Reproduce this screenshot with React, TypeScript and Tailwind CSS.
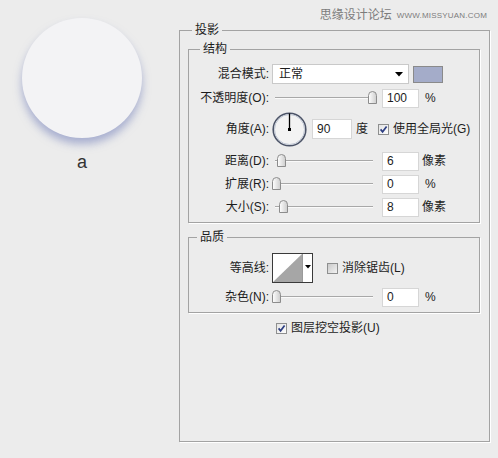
import type { ReactNode } from "react";

const labelCls = "w-[80px] shrink-0 text-right text-[12px] leading-[16px] text-[#1c1c1c]";
const legendCls = "px-[3px] text-[12px] leading-[16px] text-[#1c1c1c]";
const groupCls = "border border-[#a3a3a3] shadow-[1px_1px_0_#ffffff]";

function Label({ children }: { children: ReactNode }) {
  return <div className={labelCls}>{children}</div>;
}

function NumberBox({ value, width = 37, className = "" }: { value: string; width?: number; className?: string }) {
  return (
    <div
      className={`flex h-[19px] items-center border border-[#d6d6d6] bg-white pl-[4px] text-[12px] leading-[16px] text-[#1c1c1c] ${className}`}
      style={{ width }}
    >
      {value}
    </div>
  );
}

function Thumb({ left }: { left: number }) {
  return (
    <svg className="absolute top-0" style={{ left }} width="9" height="13" viewBox="0 0 9 13">
      <defs>
        <linearGradient id="thumbFill" x1="0" y1="0" x2="1" y2="0">
          <stop offset="0" stopColor="#ffffff" />
          <stop offset="1" stopColor="#cdcdcd" />
        </linearGradient>
      </defs>
      <path
        d="M0.5 4.5 Q0.5 0.5 4.5 0.5 Q8.5 0.5 8.5 4.5 V12.5 H0.5 Z"
        fill="url(#thumbFill)"
        stroke="#8c8c8c"
      />
    </svg>
  );
}

// offset = thumb centre in px from the start of the 98px track
function Slider({ offset }: { offset: number }) {
  return (
    <div className="relative ml-[2px] h-[14px] w-[106px] shrink-0">
      <div className="absolute left-[4px] right-[4px] top-[6px] h-px bg-[#a8a8a8]" />
      <div className="absolute left-[4px] right-[4px] top-[7px] h-px bg-[#fafafa]" />
      <Thumb left={offset - 0.5} />
    </div>
  );
}

function Checkbox({ checked }: { checked: boolean }) {
  return (
    <svg width="11" height="11" viewBox="0 0 11 11" className="shrink-0">
      <defs>
        <linearGradient id={checked ? "cbOn" : "cbOff"} x1="0" y1="0" x2="1" y2="1">
          <stop offset="0" stopColor={checked ? "#e2e2e2" : "#c8c8c8"} />
          <stop offset="1" stopColor={checked ? "#ffffff" : "#f4f4f4"} />
        </linearGradient>
      </defs>
      <rect x="0.5" y="0.5" width="10" height="10" fill={`url(#${checked ? "cbOn" : "cbOff"})`} stroke="#8e8f8f" />
      {checked && (
        <path d="M2.6 5.4 L4.6 7.8 L8.6 2.6" fill="none" stroke="#2d3e82" strokeWidth="1.7" />
      )}
    </svg>
  );
}

function Dial() {
  return (
    <svg width="35" height="35" viewBox="0 0 35 35" className="ml-[3px] shrink-0">
      <circle cx="17.5" cy="17.5" r="16.3" fill="#f3f3f3" stroke="#4b5367" strokeWidth="1.6" />
      <circle cx="17.5" cy="17.5" r="15" fill="none" stroke="#b4bccd" strokeWidth="0.8" />
      <line x1="17.5" y1="17.5" x2="17.5" y2="1.5" stroke="#000" strokeWidth="1.3" />
      <rect x="16" y="16" width="3" height="3" fill="#000" />
    </svg>
  );
}

function Contour() {
  return (
    <div className="ml-[3px] flex h-[30px] w-[41px] shrink-0 border border-[#3a3a3a] bg-white">
      <svg width="29" height="28" viewBox="0 0 29 28">
        <polygon points="0,28 29,0 29,28" fill="#a6a6a6" />
      </svg>
      <div className="flex flex-1 justify-center border-l border-[#9a9a9a] pt-[11px]">
        <svg width="6" height="4" viewBox="0 0 6 4">
          <polygon points="0,0 6,0 3,3.5" fill="#000" />
        </svg>
      </div>
    </div>
  );
}

export default function App() {
  return (
    <div className="flex h-[458px] w-[498px] bg-[#ececec] font-['Liberation_Sans','Noto_Sans_CJK_SC',sans-serif] text-[#1c1c1c]">
      {/* preview */}
      <div className="w-[179px] shrink-0">
        <div className="ml-[22px] mt-[18px] h-[120px] w-[120px] rounded-full bg-[#f3f3f5] shadow-[0_6px_8px_rgba(122,134,188,0.6)]" />
        <div className="ml-[22px] mt-[14px] w-[120px] text-center text-[18px] leading-[20px] text-[#333]">a</div>
      </div>

      {/* drop shadow panel */}
      <div className="w-[311px] shrink-0">
        <div className="flex h-[22px] justify-end pr-[3px] pt-[9px]">
          <div className="flex h-[13px] items-center text-[#7c7c7c]">
            <span className="text-[12px] leading-[13px]">思缘设计论坛</span>
            <span className="ml-[5px] text-[8px] leading-[13px] tracking-[0.2px]">WWW.MISSYUAN.COM</span>
          </div>
        </div>

        <fieldset className={`h-[420px] ${groupCls}`}>
          <legend className={`ml-[12px] ${legendCls}`}>投影</legend>

          <fieldset className={`ml-[8px] mt-[3px] h-[182px] w-[292px] ${groupCls}`}>
            <legend className={`ml-[11px] ${legendCls}`}>结构</legend>

            <div className="mt-[6px] flex h-[22px] items-center">
              <Label>混合模式:</Label>
              <div className="ml-[3px] flex h-[20px] w-[137px] items-center justify-between border border-[#c9c9c9] bg-white pl-[6px] pr-[5px] text-[12px] leading-[16px]">
                <span>正常</span>
                <svg width="8" height="5" viewBox="0 0 8 5">
                  <polygon points="0,0 8,0 4,4.5" fill="#000" />
                </svg>
              </div>
              <div className="ml-[4px] h-[17px] w-[30px] border border-[#8a8a8a] bg-[#a4acc9]" />
            </div>

            <div className="mt-[2px] flex h-[22px] items-center">
              <Label>不透明度(O):</Label>
              <Slider offset={97} />
              <NumberBox value="100" className="ml-[5px]" />
              <span className="ml-[6px] text-[12px] leading-[16px]">%</span>
            </div>

            <div className="mt-[2px] flex h-[36px] items-center">
              <Label>角度(A):</Label>
              <Dial />
              <NumberBox value="90" width={40} className="ml-[5px] h-[20px]" />
              <span className="ml-[4px] text-[12px] leading-[16px]">度</span>
              <div className="ml-[10px] flex items-center">
                <Checkbox checked />
                <span className="ml-[4px] text-[12px] leading-[16px]">使用全局光(G)</span>
              </div>
            </div>

            <div className="mt-[3px] flex h-[22px] items-center">
              <Label>距离(D):</Label>
              <Slider offset={6} />
              <NumberBox value="6" className="ml-[5px]" />
              <span className="ml-[3px] text-[12px] leading-[16px]">像素</span>
            </div>

            <div className="mt-[1px] flex h-[22px] items-center">
              <Label>扩展(R):</Label>
              <Slider offset={1} />
              <NumberBox value="0" className="ml-[5px]" />
              <span className="ml-[6px] text-[12px] leading-[16px]">%</span>
            </div>

            <div className="mt-[1px] flex h-[22px] items-center">
              <Label>大小(S):</Label>
              <Slider offset={8} />
              <NumberBox value="8" className="ml-[5px]" />
              <span className="ml-[3px] text-[12px] leading-[16px]">像素</span>
            </div>
          </fieldset>

          <fieldset className={`ml-[8px] mt-[6px] h-[84px] w-[292px] ${groupCls}`}>
            <legend className={`ml-[8px] ${legendCls}`}>品质</legend>

            <div className="mt-[7px] flex h-[32px] items-center">
              <Label>等高线:</Label>
              <Contour />
              <div className="ml-[14px] flex items-center">
                <Checkbox checked={false} />
                <span className="ml-[4px] text-[12px] leading-[16px]">消除锯齿(L)</span>
              </div>
            </div>

            <div className="mt-[2px] flex h-[22px] items-center">
              <Label>杂色(N):</Label>
              <Slider offset={1} />
              <NumberBox value="0" className="ml-[5px]" />
              <span className="ml-[6px] text-[12px] leading-[16px]">%</span>
            </div>
          </fieldset>

          <div className="mt-[5px] flex h-[20px] items-center pl-[96px]">
            <Checkbox checked />
            <span className="ml-[4px] text-[12px] leading-[16px]">图层挖空投影(U)</span>
          </div>
        </fieldset>
      </div>
    </div>
  );
}
